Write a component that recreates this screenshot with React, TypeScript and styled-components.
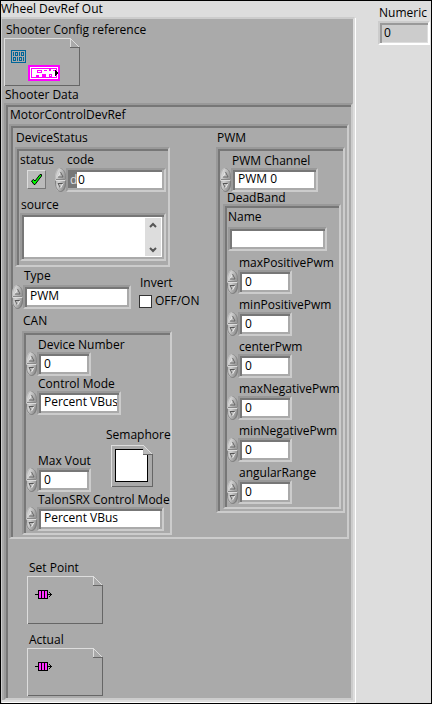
import React, { useId } from "react";
import styled, { createGlobalStyle } from "styled-components";

const GlobalStyle = createGlobalStyle`
  * { box-sizing: border-box; }
  body {
    margin: 0;
    background: #ddd;
    color: #000;
    font-family: "Open Sans", "Noto Sans", sans-serif;
    font-size: 12px;
  }
  button, input, select, textarea { font: inherit; color: inherit; margin: 0; }
`;

const Panel = styled.main`
  display: grid;
  grid-template-columns: minmax(0, 1fr) 75px;
  min-height: 100vh;
  border: 1px solid #000;
  background: #ddd;
`;

const MainColumn = styled.section`
  display: flex;
  flex-direction: column;
  padding: 0 1px 1px 0;
`;

const SideColumn = styled.aside`
  padding: 4px 1px 0 22px;
`;

const Caption = styled.div<{ $indent?: number; $line?: number }>`
  line-height: ${(p) => p.$line ?? 16}px;
  padding-left: ${(p) => p.$indent ?? 0}px;
  white-space: nowrap;
`;

const Cluster = styled.div`
  flex: 1;
  display: flex;
  flex-direction: column;
  gap: 1px;
  padding: 3px 0 0 2px;
  background: #aaa;
  border: solid;
  border-width: 2px 2px 2px 1px;
  border-color: #ccc #ddd #ddd #ccc;
  box-shadow: 1px 1px 0 #fff;
`;

const Group = styled.div<{ $pad: string }>`
  background: #aaa;
  border: 2px solid;
  border-color: #999 #ccc #ccc #999;
  box-shadow: inset 2px 2px 0 #777;
  padding: ${(p) => p.$pad};
`;

const MotorGrid = styled.div`
  display: grid;
  grid-template-columns: minmax(0, 1fr) 129px;
  align-items: start;
`;

const StatusGroup = styled(Group)`
  width: 155px;
  margin: 1px 0 1px 3px;
`;

const CanGroup = styled(Group)`
  width: 150px;
  margin: 2px 0 0 10px;
`;

const PwmGroup = styled(Group)`
  margin-top: 1px;
`;

const DeadBandGroup = styled(Group)`
  margin: 0 2px 0 5px;
`;

const Row = styled.div<{ $gap?: number; $left?: number; $top?: number }>`
  display: flex;
  gap: ${(p) => p.$gap ?? 0}px;
  padding-left: ${(p) => p.$left ?? 0}px;
  padding-top: ${(p) => p.$top ?? 0}px;
`;

const Stack = styled.div<{ $gap?: number; $left?: number; $top?: number }>`
  display: flex;
  flex-direction: column;
  gap: ${(p) => p.$gap ?? 0}px;
  padding-left: ${(p) => p.$left ?? 0}px;
  padding-top: ${(p) => p.$top ?? 0}px;
`;

const ControlBox = styled.div`
  display: grid;
  grid-template-columns: 11px auto;
  justify-content: start;
  align-items: center;
`;

const ControlLabel = styled.label<{ $line?: number }>`
  grid-column: 2;
  width: 0;
  padding-left: 1px;
  line-height: ${(p) => p.$line ?? 15}px;
  white-space: nowrap;
`;

const sunken = `
  appearance: none;
  display: block;
  height: 24px;
  padding: 1px 2px 3px 5px;
  border: 2px solid;
  border-color: #999 #ccc #ccc #999;
  border-radius: 0;
  outline: none;
  background: #fff;
  box-shadow: inset 2px 2px 0 #777, inset -2px -2px 0 #aaa;
  line-height: 16px;
`;

const TextField = styled.input<{ $width: number }>`
  ${sunken}
  width: ${(p) => p.$width}px;
`;

const RingField = styled.select<{ $width: number }>`
  ${sunken}
  width: ${(p) => p.$width}px;
`;

const IndicatorField = styled.input`
  ${sunken}
  width: 100%;
  padding-left: 4px;
  background: #ccc;
  border-color: #ccc #fff #fff #ccc;
  box-shadow: inset 2px 2px 0 #999, inset -1px -1px 0 #ddd;
`;

const CodeField = styled.div`
  display: flex;
  width: 100px;
  height: 24px;
  padding: 2px;
  background: #777;
  border: 2px solid;
  border-color: #999 #ccc #ccc #999;
  box-shadow: inset -2px -2px 0 #aaa;
`;

const Radix = styled.span`
  width: 7px;
  line-height: 16px;
  text-align: right;
  color: #ddd;
`;

const CodeInput = styled.input`
  flex: 1;
  min-width: 0;
  padding: 0 1px;
  border: 0;
  outline: none;
  background: #fff;
  line-height: 16px;
`;

const SpinnerBox = styled.span`
  display: flex;
  flex-direction: column;
  width: 11px;
`;

const SpinButton = styled.button`
  display: block;
  height: 12px;
  padding: 0;
  border: 0;
  background: none;
  svg { display: block; }
`;

const StatusButton = styled.button`
  display: grid;
  place-items: center;
  width: 19px;
  height: 19px;
  margin: 2px 0 0 7px;
  padding: 0;
  background: #bbb;
  border: 1px solid;
  border-color: #ddd #777 #777 #ddd;
`;

const SourceBox = styled.div`
  display: flex;
  height: 48px;
  padding: 2px;
  background: #fff;
  border: 2px solid;
  border-color: #999 #ccc #ccc #999;
  box-shadow: inset 2px 2px 0 #777, inset -2px -2px 0 #aaa;
`;

const SourceText = styled.textarea`
  flex: 1;
  min-width: 0;
  padding: 0 2px;
  border: 0;
  outline: none;
  resize: none;
  overflow: hidden;
  background: transparent;
`;

const ScrollTrack = styled.div`
  display: flex;
  flex-direction: column;
  justify-content: space-between;
  width: 16px;
  margin: 1px;
  background: #ddd;
`;

const ScrollButton = styled.button`
  display: grid;
  place-items: center;
  height: 13px;
  padding: 0;
  border: 0;
  background: none;
`;

const CheckLabel = styled.label`
  display: flex;
  align-items: center;
  gap: 3px;
  line-height: 16px;
  white-space: nowrap;
`;

const CheckInput = styled.input`
  appearance: none;
  width: 13px;
  height: 13px;
  background: #fff;
  border: 1px solid #333;
  &:checked { background: #333; box-shadow: inset 0 0 0 2px #fff; }
`;

const MaxRow = styled.div`
  display: flex;
  justify-content: space-between;
  align-items: flex-end;
`;

const SemaphoreBox = styled.div`
  width: 59px;
  margin-bottom: 5px;
`;

const Drawing = styled.svg`
  display: block;
  flex: none;
`;

const ControlGap = styled(ControlBox)`
  margin-left: auto;
`;

const SourceLabel = styled.label`
  padding-left: 1px;
  line-height: 17px;
`;

const NameLabel = styled.label`
  line-height: 15px;
`;

function Spinner({ name }: { name: string }) {
  const id = useId();
  return (
    <SpinnerBox>
      <SpinButton type="button" aria-label={`Increase ${name}`}>
        <svg width="11" height="12" viewBox="0 0 11 12">
          <defs>
            <linearGradient id={`${id}u`} x1="0" x2="1" y1="0" y2="0.4">
              <stop offset="0" stopColor="#999" />
              <stop offset="0.35" stopColor="#d4d4d4" />
              <stop offset="1" stopColor="#999" />
            </linearGradient>
          </defs>
          <path d="M0 12V9C0 4 2 0 5.5 0S11 4 11 9V12Z" fill={`url(#${id}u)`} />
          <path d="M0.5 11.5V9C0.5 4 3 0.5 5.5 0.5" fill="none" stroke="#bbb" />
          <path d="M5.5 0.5C8 0.5 10.5 4 10.5 9V11" fill="none" stroke="#888" />
          <path d="M5.5 4L8 9H3Z" fill="#bbb" />
          <path d="M5.5 4L3 9" stroke="#eee" />
          <path d="M5.5 4L8 9H3" fill="none" stroke="#666" />
          <path d="M1 11.5H10" stroke="#888" />
        </svg>
      </SpinButton>
      <SpinButton type="button" aria-label={`Decrease ${name}`}>
        <svg width="11" height="12" viewBox="0 0 11 12">
          <defs>
            <linearGradient id={`${id}d`} x1="0" x2="1" y1="0" y2="0.4">
              <stop offset="0" stopColor="#aaa" />
              <stop offset="0.35" stopColor="#d0d0d0" />
              <stop offset="1" stopColor="#888" />
            </linearGradient>
          </defs>
          <path d="M0 0V3C0 8 2 12 5.5 12S11 8 11 3V0Z" fill={`url(#${id}d)`} />
          <path d="M0.5 1V3C0.5 8 3 11.5 5.5 11.5S10.5 8 10.5 3V1" fill="none" stroke="#777" strokeOpacity="0.8" />
          <path d="M1 0.5H10" stroke="#ddd" />
          <path d="M3 3.5H8L5.5 8Z" fill="#bbb" />
          <path d="M3 3.5H8" stroke="#555" />
          <path d="M3 3.5L5.5 8" stroke="#666" />
          <path d="M8 3.5L5.5 8" stroke="#eee" />
        </svg>
      </SpinButton>
    </SpinnerBox>
  );
}

function NumberControl({ label, width = 54 }: { label: string; width?: number }) {
  const id = useId();
  return (
    <ControlBox>
      <ControlLabel htmlFor={id}>{label}</ControlLabel>
      <Spinner name={label} />
      <TextField id={id} $width={width} defaultValue="0" />
    </ControlBox>
  );
}

function RingControl({ label, value, width, line }: { label: string; value: string; width: number; line?: number }) {
  const id = useId();
  return (
    <ControlBox>
      <ControlLabel htmlFor={id} $line={line}>{label}</ControlLabel>
      <Spinner name={label} />
      <RingField id={id} $width={width} defaultValue={value}>
        <option>{value}</option>
      </RingField>
    </ControlBox>
  );
}

function NoteFrame({ children }: { children: React.ReactNode }) {
  return (
    <Drawing width="76" height="48" viewBox="0 0 76 48" shapeRendering="crispEdges">
      <path d="M0.5 48V0.5H66.5V9.5" fill="none" stroke="#ddd" />
      <path d="M66.5 0.5L75.5 9.5" stroke="#ddd" shapeRendering="auto" />
      <path d="M66 9.5H75.5V47.5H1" fill="none" stroke="#666" />
      {children}
    </Drawing>
  );
}

function QueueGlyph() {
  return (
    <g>
      <path d="M8 18.5H11" stroke="#000" />
      <rect x="11" y="14" width="10" height="9" fill="#000" />
      <path d="M12 15h2v7h-2zM15 15h2v7h-2zM18 15h2v7h-2z" fill="#f3f" />
      <path d="M21 18.5H25" stroke="#000" />
      <path d="M22 16h1v1h-1zM23 17h1v1h-1zM23 19h1v1h-1zM22 20h1v1h-1z" fill="#000" />
    </g>
  );
}

function ConfigGlyph() {
  return (
    <g>
      <rect x="7.5" y="12.5" width="14" height="12" fill="none" stroke="#069" />
      <path
        d="M9.5 14v4M11.5 14.5h2v3h-2zM15.5 14v4M17.5 14.5h2v3h-2zM9.5 19.5h2v3h-2zM13.5 19v4M15.5 19.5h2v3h-2zM19.5 19v4"
        fill="none"
        stroke="#069"
      />
      <rect x="24" y="27" width="32" height="16" fill="#f0f" />
      <rect x="26" y="29" width="28" height="12" fill="#fff" />
      <rect x="27.5" y="30.5" width="25" height="9" fill="none" stroke="#f0f" />
      <path d="M33.5 32.5h4v2h-4zM45.5 36.5h2v2h-2z" fill="none" stroke="#f0f" />
      <path d="M40 32h3v1h-3zM45 31h2v2h-2zM32 37h3v2h-3zM38 36h4v3h-4zM49 32h2v1h-2z" fill="#f0f" />
      <path d="M51 32v6h1v-1h1v-1h1v-2h-1v-1h-1v-1z" fill="#000" />
    </g>
  );
}

function SemaphoreDrawing() {
  return (
    <Drawing width="42" height="42" viewBox="0 0 42 42" shapeRendering="crispEdges">
      <path d="M0.5 42V0.5H32" fill="none" stroke="#ddd" />
      <path d="M41.5 9V41.5H1" fill="none" stroke="#666" />
      <rect x="4.5" y="4.5" width="32" height="32" fill="#fff" stroke="#000" />
      <path d="M32 0V9H42V0Z" fill="#aaa" />
      <path d="M32.5 0V9H41Z" fill="#bbb" shapeRendering="auto" />
      <path d="M32 0L41 9" stroke="#ddd" shapeRendering="auto" />
      <path d="M32 9.5H42" stroke="#666" />
    </Drawing>
  );
}

function Chevron({ down }: { down?: boolean }) {
  return (
    <svg width="8" height="6" viewBox="0 0 8 6">
      <path d={down ? "M1 1L4 4L7 1" : "M1 5L4 2L7 5"} fill="none" stroke="#555" strokeWidth="2" />
    </svg>
  );
}

const deadBandFields = [
  "maxPositivePwm",
  "minPositivePwm",
  "centerPwm",
  "maxNegativePwm",
  "minNegativePwm",
  "angularRange",
];

function DeviceStatus() {
  return (
    <StatusGroup $pad="2px 2px 4px 3px">
      <Row>
        <Stack>
          <Caption $line={17}>status</Caption>
          <StatusButton type="button" aria-label="status">
            <svg width="13" height="13" viewBox="0 0 13 13">
              <path d="M1.5 8L3.5 6.5L5 8L10 1.5H11.5V3L5 11.5H4Z" fill="#0f0" stroke="#000" />
            </svg>
          </StatusButton>
        </Stack>
        <ControlGap>
          <ControlLabel htmlFor="code" $line={17}>code</ControlLabel>
          <Spinner name="code" />
          <CodeField>
            <Radix>d</Radix>
            <CodeInput id="code" defaultValue="0" />
          </CodeField>
        </ControlGap>
      </Row>
      <Stack $top={4}>
        <SourceLabel htmlFor="source">source</SourceLabel>
        <SourceBox>
          <SourceText id="source" />
          <ScrollTrack>
            <ScrollButton type="button" aria-label="Scroll up"><Chevron /></ScrollButton>
            <ScrollButton type="button" aria-label="Scroll down"><Chevron down /></ScrollButton>
          </ScrollTrack>
        </SourceBox>
      </Stack>
    </StatusGroup>
  );
}

function Can() {
  return (
    <CanGroup $pad="4px 5px 2px 2px">
      <NumberControl label="Device Number" />
      <RingControl label="Control Mode" value="Percent VBus" width={84} />
      <Stack $top={12}>
        <MaxRow>
          <NumberControl label="Max Vout" />
          <SemaphoreBox>
            <Caption>Semaphore</Caption>
            <Row $left={5} $top={2}><SemaphoreDrawing /></Row>
          </SemaphoreBox>
        </MaxRow>
      </Stack>
      <RingControl label="TalonSRX Control Mode" value="Percent VBus" width={127} />
    </CanGroup>
  );
}

function Pwm() {
  return (
    <PwmGroup $pad="4px 0 2px 0">
      <Row $left={2}>
        <RingControl label="PWM Channel" value="PWM 0" width={87} />
      </Row>
      <Caption $indent={9} $line={12}>DeadBand</Caption>
      <DeadBandGroup $pad="3px 0 3px 2px">
        <Stack $left={1} $gap={3}>
          <NameLabel htmlFor="deadband-name">Name</NameLabel>
          <TextField id="deadband-name" $width={99} />
        </Stack>
        <Stack $top={4} $gap={3}>
          {deadBandFields.map((name) => (
            <NumberControl key={name} label={name} />
          ))}
        </Stack>
      </DeadBandGroup>
    </PwmGroup>
  );
}

export default function App() {
  return (
    <>
      <GlobalStyle />
      <Panel>
        <MainColumn>
          <Caption>Wheel DevRef Out</Caption>
          <Cluster>
            <Stack>
              <Caption $indent={2}>Shooter Config reference</Caption>
              <NoteFrame><ConfigGlyph /></NoteFrame>
            </Stack>
            <Stack>
              <Caption $indent={1}>Shooter Data</Caption>
              <Group $pad="2px 2px 2px 3px">
                <Caption $indent={1}>MotorControlDevRef</Caption>
                <Stack $top={1}>
                  <Group $pad="4px 2px 2px 1px">
                    <MotorGrid>
                      <div>
                        <Caption $indent={4}>DeviceStatus</Caption>
                        <DeviceStatus />
                        <Row $gap={8}>
                          <RingControl label="Type" value="PWM" width={108} line={16} />
                          <Stack $top={7} $gap={2}>
                            <Caption $indent={1}>Invert</Caption>
                            <CheckLabel>
                              <CheckInput type="checkbox" aria-label="Invert" />
                              OFF/ON
                            </CheckLabel>
                          </Stack>
                        </Row>
                        <Stack $top={4}>
                          <Caption $indent={11}>CAN</Caption>
                        </Stack>
                        <Can />
                      </div>
                      <div>
                        <Caption $indent={1}>PWM</Caption>
                        <Pwm />
                      </div>
                    </MotorGrid>
                  </Group>
                </Stack>
                <Stack $top={21} $left={18} $gap={8}>
                  {["Set Point", "Actual"].map((name) => (
                    <Stack key={name}>
                      <Caption $indent={2}>{name}</Caption>
                      <NoteFrame><QueueGlyph /></NoteFrame>
                    </Stack>
                  ))}
                </Stack>
              </Group>
            </Stack>
          </Cluster>
        </MainColumn>
        <SideColumn>
          <label htmlFor="numeric"><Caption $indent={1}>Numeric</Caption></label>
          <IndicatorField id="numeric" value="0" readOnly />
        </SideColumn>
      </Panel>
    </>
  );
}
